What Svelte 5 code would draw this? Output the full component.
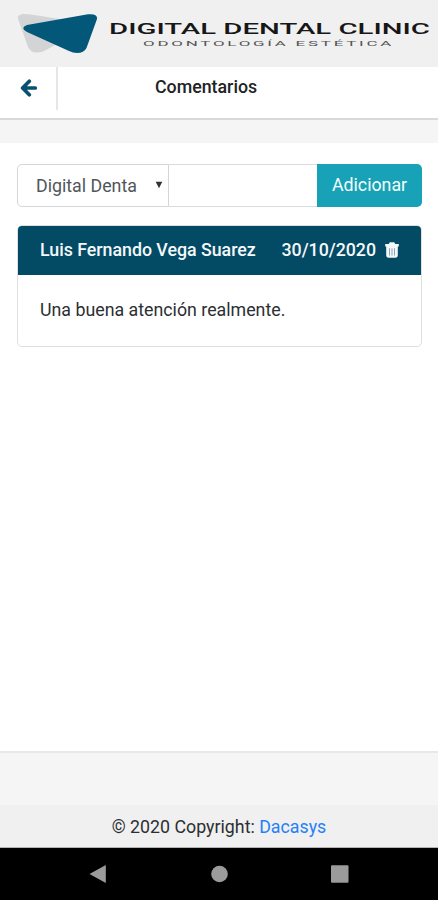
<script>
  let comment = $state('');
  const comments = [
    { author: 'Luis Fernando Vega Suarez', date: '30/10/2020', text: 'Una buena atención realmente.' }
  ];
</script>

<div class="screen">
  <header class="brand">
    <svg width="438" height="67" viewBox="0 0 438 67" role="img" aria-label="Digital Dental Clinic">
      <path d="M23 14 Q16 15 18.5 20 L28 47 Q31 52.5 36 52.5 Q41 53 46 50 L66 39 L66 20 L31 14.5 Q27 14 23 14Z" fill="#d3d4d6" />
      <path d="M27 25 L88 14.3 Q98 13.5 97 19 L86.500 48 Q84 53 77 53 Q73 53 69 51 L27 32 Q19.500 28 27 25Z" fill="#035879" />
      <text x="109" y="34" textLength="321" lengthAdjust="spacingAndGlyphs" font-size="15" font-weight="500" fill="#171717">DIGITAL DENTAL CLINIC</text>
      <text x="143" y="46" textLength="251" lengthAdjust="spacingAndGlyphs" font-size="7.400" letter-spacing="1.2" fill="#555">ODONTOLOGÍA ESTÉTICA</text>
    </svg>
  </header>

  <nav class="titlebar">
    <button class="back" aria-label="Volver">
      <svg width="18" height="18" viewBox="0 0 18 18" fill="none" stroke="#075070" stroke-width="3.7" stroke-linecap="round" stroke-linejoin="round">
        <path d="M9.300 2.300 L2.600 9 L9.300 15.700 M3 9 H15.300" />
      </svg>
    </button>
    <h1>Comentarios</h1>
  </nav>
  <div class="strip"></div>

  <main>
    <form class="group" onsubmit={(e) => e.preventDefault()}>
      <div class="picker" role="button" tabindex="0">
        <span>Digital Denta</span>
        <svg width="8" height="8" viewBox="0 0 8 8"><path d="M.7 .8H7.3L4 7.2Z" fill="#333" /></svg>
      </div>
      <input bind:value={comment} aria-label="Comentario" />
      <button class="add">Adicionar</button>
    </form>

    {#each comments as item}
      <article>
        <div class="head">
          <span class="author">{item.author}</span>
          <span class="date">{item.date}</span>
          <svg width="14" height="16" viewBox="0 0 14 16">
            <path d="M3.800 2 L4.800 .3H9.200L10.200 2H13.8V4.600H.2V2ZM1.200 4.600H12.800V13.6Q12.8 15.7 10.8 15.7H3.2Q1.2 15.7 1.2 13.6Z" fill="#f4f8fa" />
            <path d="M4.5 6.2V13.5M7 6.2V13.5M9.5 6.2V13.5" stroke="#8ba6b5" stroke-width="1" />
          </svg>
        </div>
        <p>{item.text}</p>
      </article>
    {/each}
  </main>

  <footer>
    <div class="spacer"></div>
    <div class="copyright"><span>© 2020 Copyright: <b>Dacasys</b></span></div>
  </footer>

  <div class="system">
    <svg width="438" height="52" viewBox="0 0 438 52" fill="#9b9b9b">
      <path d="M89.5 26 L105.8 17 V35Z" />
      <circle cx="219.5" cy="26" r="8.3" />
      <rect x="331" y="17.300" width="17.5" height="17.5" rx="1" />
    </svg>
  </div>
</div>

<style>
  :global(body) { margin: 0; }
  .screen {
    width: 438px;
    height: 900px;
    display: flex;
    flex-direction: column;
    overflow: hidden;
    background: #fff;
    color: #2b2f33;
    font: 17.8px/26px Roboto, sans-serif;
  }
  svg { display: block; flex: none; }
  button, input { font: inherit; margin: 0; border: 0; box-sizing: border-box; }
  .brand { height: 67px; background: #f0f0f0; flex: none; }
  .titlebar {
    height: 51px;
    flex: none;
    display: flex;
    align-items: flex-start;
    border-bottom: 2px solid #d9d9d9;
  }
  .back {
    width: 58px;
    height: 43px;
    padding: 0 0 2px 20px;
    background: none;
    border-right: 2px solid #e5e6e7;
  }
  h1 {
    margin: 7px 0 0 97px;
    font-size: 17.8px;
    font-weight: 500;
    color: #202224;
  }
  .strip { height: 23px; background: #f5f5f5; flex: none; }
  main { flex: 1; padding: 21px 16px 0 17px; }
  .group { display: flex; height: 43px; }
  .picker {
    width: 152px;
    box-sizing: border-box;
    display: flex;
    align-items: center;
    justify-content: space-between;
    padding: 0 5px 0 18px;
    border: 1px solid #d3d6d9;
    border-radius: 5px 0 0 5px;
    color: #51565b;
  }
  .picker svg { margin-bottom: 2px; }
  input {
    width: 148px;
    border: solid #d9dcdf;
    border-width: 1px 0;
    padding: 0 12px;
    outline: 0;
  }
  .add {
    width: 105px;
    padding: 0 0 2px;
    border-radius: 0 5px 5px 0;
    background: #18a2b8;
    color: #f4ffff;
  }
  article {
    margin-top: 18px;
    height: 122px;
    box-sizing: border-box;
    border: 1px solid #dfdfdf;
    border-radius: 5px;
  }
  .head {
    height: 49px;
    box-sizing: border-box;
    display: flex;
    align-items: center;
    padding: 0 22px 2px;
    background: #034a65;
    color: #f4f8fa;
    font-weight: 500;
    letter-spacing: -0.02px;
    border-radius: 4px 4px 0 0;
  }
  .date { margin-left: auto; margin-right: 9px; }
  p { margin: 22px 22px 0; }
  footer { flex: none; height: 97px; }
  .spacer { height: 54px; border-top: 2px solid #e8e8e8; background: #f5f5f5; box-sizing: border-box; }
  .copyright {
    height: 43px;
    box-sizing: border-box;
    display: flex;
    align-items: center;
    justify-content: center;
    padding-top: 2px;
    background: #f0f0f0;
    border-bottom: 1px solid #b4b4b4;
  }
  b { font-weight: 400; color: #2580f7; }
  .system { height: 52px; background: #000; flex: none; }
</style>
